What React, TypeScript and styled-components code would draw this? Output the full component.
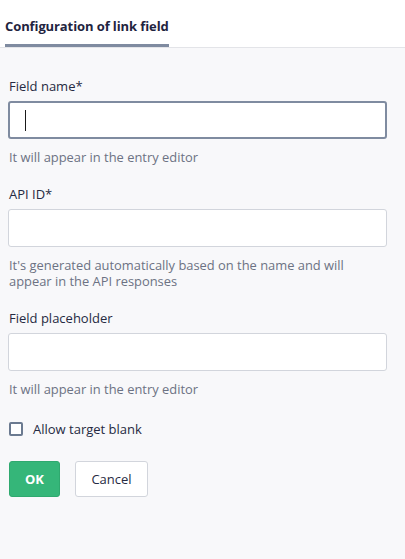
import React from "react";
import styled, { createGlobalStyle } from "styled-components";

const Global = createGlobalStyle`
  html, body { margin: 0; padding: 0; background: #f8f8fa; }
  body { font-family: "Open Sans", "Noto Sans", sans-serif; -webkit-font-smoothing: antialiased; }
  * { box-sizing: border-box; }
`;

const Page = styled.div`
  width: 405px;
  min-height: 559px;
  background: #f8f8fa;
`;

const Header = styled.div`
  height: 48px;
  background: #ffffff;
  border-bottom: 1px solid #e3e4e8;
  padding-left: 5px;
  display: flex;
  align-items: stretch;
`;

const Tab = styled.div`
  display: flex;
  align-items: center;
  padding-top: 7px;
  border-bottom: 3px solid #7f8ba0;
  font-size: 13px;
  font-weight: 700;
  color: #1f2440;
  letter-spacing: -0.1px;
`;

const Body = styled.div`
  padding: 28px 18px 0 8px;
  display: flex;
  flex-direction: column;
  gap: 19px;
`;

const Field = styled.div`
  display: flex;
  flex-direction: column;
`;

const Label = styled.label`
  font-size: 13px;
  line-height: 20px;
  color: #262a42;
  padding-left: 1px;
  margin-bottom: 5px;
`;

const Input = styled.div<{ $focused?: boolean }>`
  height: 38px;
  background: #ffffff;
  border: ${(p) => (p.$focused ? "2px solid #7f8ba0" : "1px solid #d2d5dc")};
  border-radius: 3px;
  display: flex;
  align-items: center;
  padding-left: 15px;
`;

const Caret = styled.span`
  width: 1px;
  height: 21px;
  background: #1a1a1a;
`;

const Help = styled.p`
  margin: 10px 0 0;
  padding-left: 1px;
  font-size: 12.9px;
  line-height: 16px;
  color: #6c7283;
`;

const CheckRow = styled.label`
  display: flex;
  align-items: center;
  gap: 10px;
  margin-top: 4px;
  padding-left: 1px;
  font-size: 13px;
  color: #262a42;
`;

const Box = styled.span`
  width: 14px;
  height: 14px;
  border: 2px solid #6b7a90;
  border-radius: 2px;
  background: #ffffff;
`;

const Actions = styled.div`
  display: flex;
  gap: 15px;
  margin-top: 4px;
  padding-left: 1px;
`;

const Button = styled.button<{ $primary?: boolean }>`
  height: 36px;
  width: ${(p) => (p.$primary ? "51px" : "73px")};
  padding: 0;
  border-radius: 3px;
  font-family: inherit;
  font-size: 13px;
  font-weight: ${(p) => (p.$primary ? 700 : 400)};
  color: ${(p) => (p.$primary ? "#ffffff" : "#262a42")};
  background: ${(p) => (p.$primary ? "#35b679" : "#ffffff")};
  border: 1px solid ${(p) => (p.$primary ? "#2fa96f" : "#d2d5dc")};
`;

export default function App() {
  return (
    <Page>
      <Global />
      <Header>
        <Tab>Configuration of link field</Tab>
      </Header>
      <Body>
        <Field>
          <Label>Field name*</Label>
          <Input $focused>
            <Caret />
          </Input>
          <Help>It will appear in the entry editor</Help>
        </Field>
        <Field>
          <Label>API ID*</Label>
          <Input />
          <Help>
            It's generated automatically based on the name and will
            <br />
            appear in the API responses
          </Help>
        </Field>
        <Field>
          <Label>Field placeholder</Label>
          <Input />
          <Help>It will appear in the entry editor</Help>
        </Field>
        <CheckRow>
          <Box />
          Allow target blank
        </CheckRow>
        <Actions>
          <Button $primary>OK</Button>
          <Button>Cancel</Button>
        </Actions>
      </Body>
    </Page>
  );
}
